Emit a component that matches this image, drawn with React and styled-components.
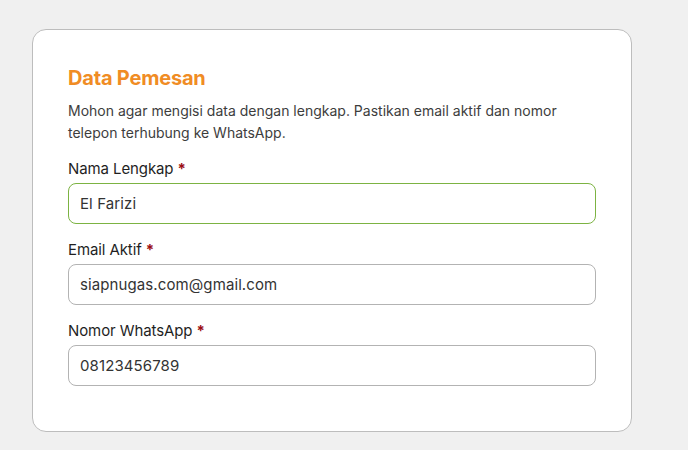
import React from 'react';
import styled, { createGlobalStyle } from 'styled-components';

const GlobalStyle = createGlobalStyle`
  html, body {
    margin: 0;
    padding: 0;
    background: #f0f0f0;
    font-family: Inter, "Open Sans", sans-serif;
  }
  * { box-sizing: border-box; }
`;

const Page = styled.div`
  min-height: 450px;
  padding: 29px 0 0 32px;
`;

const Card = styled.section`
  width: 600px;
  background: #fff;
  border: 1px solid #bdbdbd;
  border-radius: 14px;
  padding: 36px 35px 45px;
  display: flex;
  flex-direction: column;
`;

const Title = styled.h2`
  margin: 0;
  font-size: 20px;
  line-height: 24px;
  font-weight: 700;
  color: #f08c24;
  letter-spacing: -0.2px;
`;

const Intro = styled.p`
  margin: 10px 0 15px;
  font-size: 14px;
  line-height: 22px;
  color: #3d3d3d;
  letter-spacing: 0;
`;

const Field = styled.div`
  display: flex;
  flex-direction: column;
  gap: 4px;
  & + & {
    margin-top: 16px;
  }
`;

const Label = styled.label`
  font-size: 15px;
  line-height: 20px;
  font-weight: 400;
  color: #1f1f1f;
  letter-spacing: -0.1px;
`;

const Required = styled.span`
  color: #9b0d14;
  font-weight: 700;
  margin-left: 4px;
`;

const Input = styled.input`
  width: 100%;
  height: 41px;
  padding: 0 11px;
  border: 1px solid ${(p) => (p.$focused ? '#7cb342' : '#b3b3b3')};
  border-radius: 8px;
  font-family: inherit;
  font-size: 15px;
  letter-spacing: 0.1px;
  color: #333;
  background: #fff;
  outline: none;
`;

const fields = [
  { id: 'nama', label: 'Nama Lengkap', value: 'El Farizi', focused: true },
  { id: 'email', label: 'Email Aktif', value: 'siapnugas.com@gmail.com' },
  { id: 'wa', label: 'Nomor WhatsApp', value: '08123456789' },
];

export default function App() {
  return (
    <>
      <GlobalStyle />
      <Page>
        <Card>
          <Title>Data Pemesan</Title>
          <Intro>
            Mohon agar mengisi data dengan lengkap. Pastikan email aktif dan nomor
            <br />
            telepon terhubung ke WhatsApp.
          </Intro>
          {fields.map((f) => (
            <Field key={f.id}>
              <Label htmlFor={f.id}>
                {f.label}
                <Required>*</Required>
              </Label>
              <Input id={f.id} defaultValue={f.value} $focused={f.focused} />
            </Field>
          ))}
        </Card>
      </Page>
    </>
  );
}
